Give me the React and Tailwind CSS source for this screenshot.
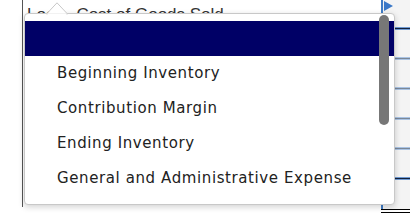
import React from "react";

const items = [
  "Beginning Inventory",
  "Contribution Margin",
  "Ending Inventory",
  "General and Administrative Expense",
];

export default function App() {
  return (
    <div className="relative w-[410px] h-[217px] bg-white overflow-hidden">
      {/* background sheet */}
      <div className="flex h-[209px]">
        <div className="w-[22px]" />
        <div className="w-[1px] h-[207px] bg-[#555]" />
        <div className="flex-1 flex flex-col">
          <div
            className="flex items-start pt-[5px] text-[17px] leading-[20px] text-[#333] h-[24px]"
            style={{ fontFamily: '"Liberation Sans", Arial, sans-serif' }}
          >
            <span className="ml-[4px]">Loo</span>
            <span className="ml-[21px]">Cost of Goods Sold</span>
          </div>
        </div>
        <div className="w-[29px] relative flex flex-col bg-[#f4f4f4] border-l-2 border-[#3f7cc6]">
          <div className="h-[27px]" />
          {["d", "l", "l", "l", "l", "d"].map((k, i) => (
            <div key={i} className="flex flex-col">
              {k === "d" ? (
                <div className="h-[3px] bg-[#14213a] border-y border-[#6f9ad3]" />
              ) : (
                <div className="h-[3px] bg-[#7b8796] border-y border-[#a9c3e4]" />
              )}
              <div className="h-[27px]" />
            </div>
          ))}
        </div>
      </div>
      <div className="ml-[381px] w-[29px] h-[4px] border-y border-black" />
      {/* blue flag */}
      <svg className="absolute left-[384px] top-[1px]" width="10" height="10" viewBox="0 0 10 10">
        <polygon points="0,0 9,5 0,10" fill="#3a78c8" />
      </svg>

      {/* dropdown popup */}
      <div className="absolute left-[24px] top-[13px] w-[371px] h-[192px] bg-white border border-[#c8c8c8] rounded-[4px] shadow-[0_2px_6px_rgba(0,0,0,0.18)] overflow-hidden">
        <div className="pt-[7px] flex flex-col" style={{ fontFamily: '"DejaVu Sans", Verdana, sans-serif' }}>
          <div className="h-[35px] bg-[#000066]" />
          {items.map((t) => (
            <div
              key={t}
              className="h-[35px] flex items-center pl-[32px] text-[15px] tracking-[0.6px] text-[#222]"
            >
              {t}
            </div>
          ))}
        </div>
        <div className="absolute left-[354px] top-[1px] w-[10px] h-[110px] rounded-full bg-[#777]" />
      </div>
      {/* caret */}
      <svg className="absolute left-[46px] top-[2px]" width="22" height="13" viewBox="0 0 22 13">
        <polygon points="0.5,12 11,0.8 21.5,12" fill="white" stroke="#c8c8c8" strokeWidth="1" />
        <rect x="1.5" y="11.5" width="19" height="2" fill="white" />
      </svg>
    </div>
  );
}
